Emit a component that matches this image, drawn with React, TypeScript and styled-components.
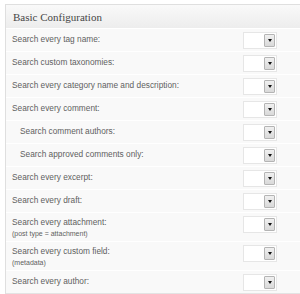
import React from "react";
import styled, { createGlobalStyle } from "styled-components";

const GlobalStyle = createGlobalStyle`
  html, body {
    margin: 0;
    padding: 0;
    background: #ffffff;
    overflow: hidden;
  }
`;

const Panel = styled.div`
  width: 300px;
  margin: 4px 0 0 5px;
  border: solid 1px #dfdfdf;
  border-right: none;
  background-color: #f9f9f9;
  font-family: "Liberation Sans", Arial, sans-serif;
`;

const Header = styled.div`
  height: 23px;
  display: flex;
  align-items: center;
  padding-left: 7px;
  background: linear-gradient(to bottom, #f9f9f9, #ededed);
  border-bottom: solid 1px #dfdfdf;
  font-family: "Liberation Serif", Georgia, serif;
  font-size: 11px;
  color: #464646;
`;

const Row = styled.div`
  display: flex;
  align-items: flex-start;
  justify-content: space-between;
  padding: 3px 29px 2px 6px;
  border-top: solid 1px #ffffff;
  border-bottom: solid 1px #e3e3e3;
  margin-top: -1px;
`;

const Label = styled.div<{ $indent?: boolean; $hasNote?: boolean }>`
  padding-left: ${(p) => (p.$indent ? "8px" : "0")};
  font-size: 8.3px;
  line-height: ${(p) => (p.$hasNote ? "13px" : "15px")};
  color: #5f5f5f;
`;

const Note = styled.div`
  font-size: 7px;
  line-height: 10px;
  color: #5f5f5f;
`;

const Select = styled.div`
  width: 34px;
  height: 17px;
  box-sizing: border-box;
  display: flex;
  justify-content: flex-end;
  align-items: stretch;
  padding: 1px;
  background-color: #ffffff;
  border: solid 1px #e6e6e6;
`;

const Arrow = styled.div`
  width: 11px;
  box-sizing: border-box;
  display: flex;
  justify-content: center;
  align-items: center;
  background: linear-gradient(to bottom, #f0f0f0, #d9d9d9);
  border: solid 1px #b4b4b4;
  border-radius: 1px;
`;

const Triangle = styled.div`
  width: 0;
  height: 0;
  border-left: 2.5px solid transparent;
  border-right: 2.5px solid transparent;
  border-top: 3px solid #111111;
`;

type Option = { label: string; note?: string; indent?: boolean };

const options: Option[] = [
  { label: "Search every tag name:" },
  { label: "Search custom taxonomies:" },
  { label: "Search every category name and description:" },
  { label: "Search every comment:" },
  { label: "Search comment authors:", indent: true },
  { label: "Search approved comments only:", indent: true },
  { label: "Search every excerpt:" },
  { label: "Search every draft:" },
  { label: "Search every attachment:", note: "(post type = attachment)" },
  { label: "Search every custom field:", note: "(metadata)" },
  { label: "Search every author:" },
];

const App = () => {
  return (
    <>
      <GlobalStyle />
      <Panel>
        <Header>Basic Configuration</Header>
        {options.map((o) => (
          <Row key={o.label}>
            <div>
              <Label $indent={o.indent} $hasNote={!!o.note}>
                {o.label}
              </Label>
              {o.note && <Note>{o.note}</Note>}
            </div>
            <Select>
              <Arrow>
                <Triangle />
              </Arrow>
            </Select>
          </Row>
        ))}
      </Panel>
    </>
  );
};

export default App;
